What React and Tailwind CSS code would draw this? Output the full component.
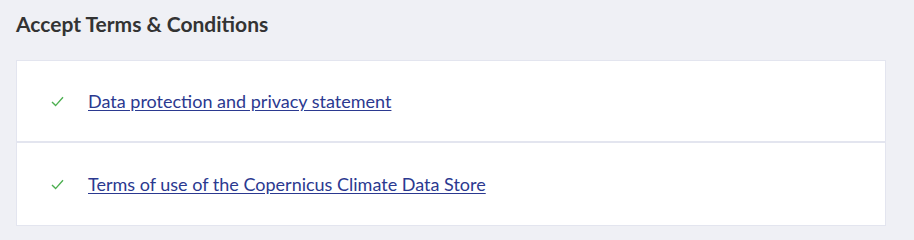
const items = [
    'Data protection and privacy statement',
    'Terms of use of the Copernicus Climate Data Store',
]

const App = () => {
    return (
        <div className="min-h-[240px] bg-[#eff0f5] px-4 pt-[11px] font-['Lato',sans-serif]">
            <h2 className="text-[21px] leading-[26px] font-bold text-[#333333]">Accept Terms &amp; Conditions</h2>
            <div className="mt-[23px] w-[870px] border border-[#e3e5ef] bg-white">
                {items.map((text, i) => (
                    <div
                        key={text}
                        className={`flex h-[82px] items-center pl-[34px] ${i === 0 ? 'border-b-2 border-[#e3e5ef]' : ''}`}
                    >
                        <svg width="13" height="11" viewBox="0 0 13 11" className="mr-[24px]">
                            <path d="M1 6 L4.6 9.6 L12 1.2" fill="none" stroke="#4caf50" strokeWidth="1.4" />
                        </svg>
                        <a href="#" className="text-[18px] text-[#2b3990] underline underline-offset-2">
                            {text}
                        </a>
                    </div>
                ))}
            </div>
        </div>
    )
}

export default App
